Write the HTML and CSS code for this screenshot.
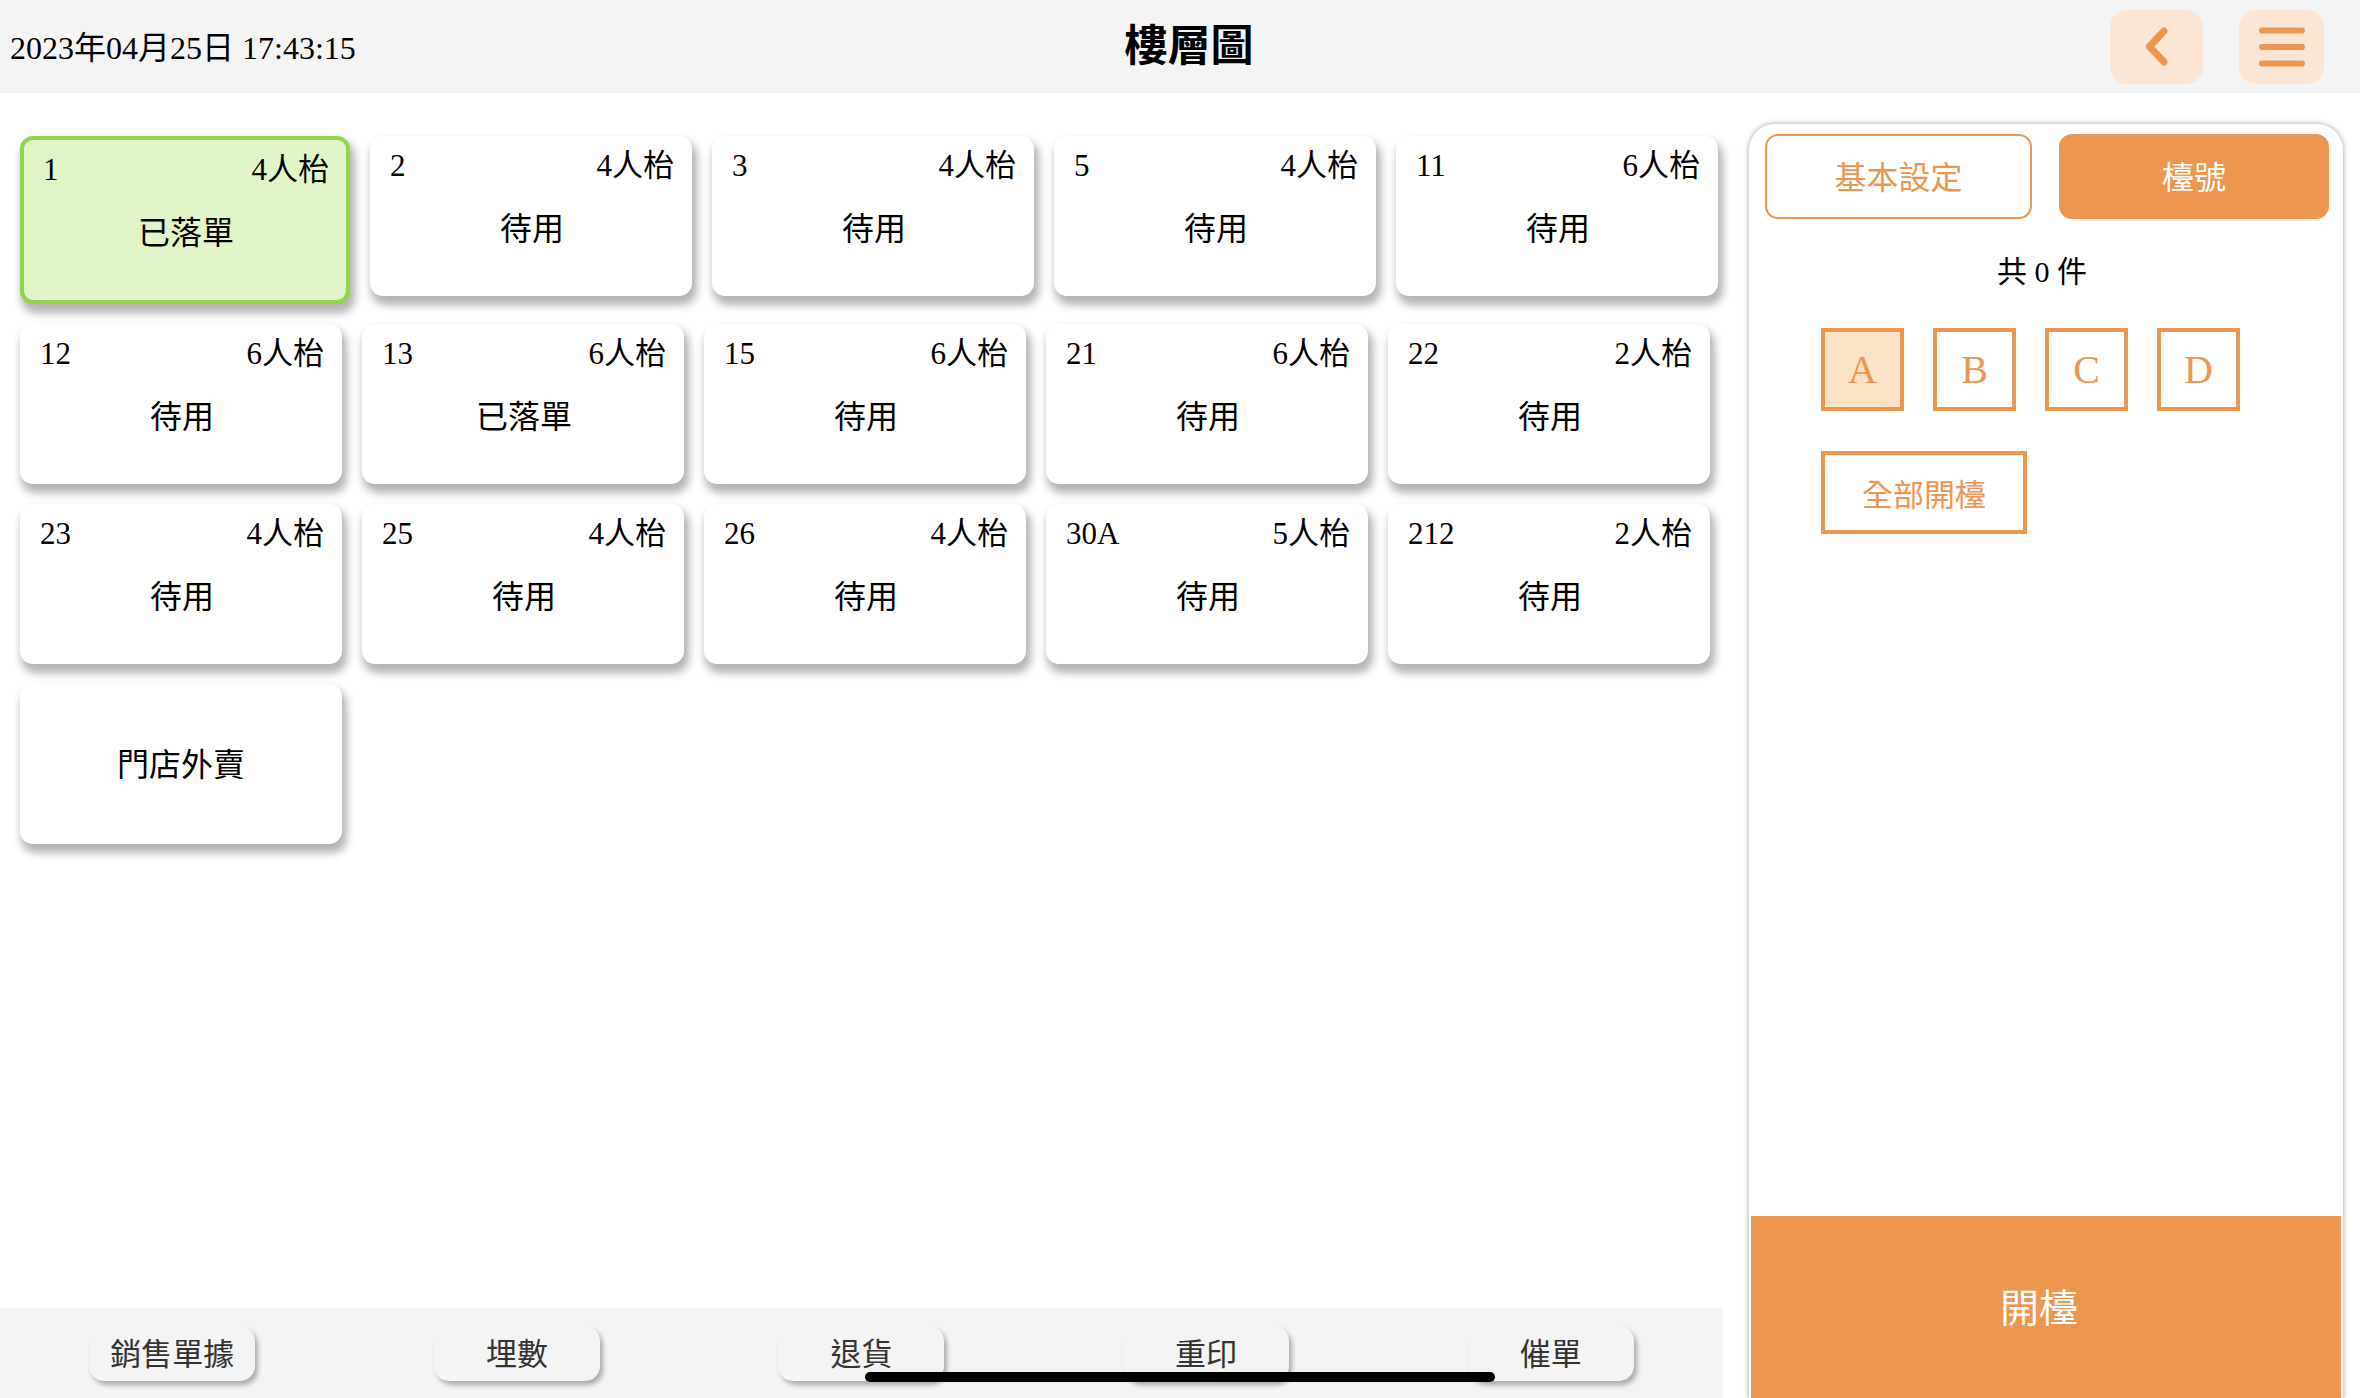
FILE: index.html
```html
<!DOCTYPE html>
<html lang="zh-Hant">
<head>
<meta charset="utf-8">
<title>樓層圖</title>
<link rel="stylesheet" href="styles.css">
</head>
<body>
<header class="header">
  <div class="date">2023年04月25日 17:43:15</div>
  <h1 class="title">樓層圖</h1>
  <div class="header-actions">
    <div class="icon-btn back">
      <svg width="23" height="39" viewBox="0 0 23 39"><path d="M19 4 L4.5 19.5 L19 35" fill="none" stroke="#ed9650" stroke-width="7" stroke-linecap="round" stroke-linejoin="round"/></svg>
    </div>
    <div class="icon-btn menu">
      <svg width="46" height="40" viewBox="0 0 46 40"><path d="M3 3.5 H43 M3 20 H43 M3 36.5 H43" fill="none" stroke="#ed9650" stroke-width="6" stroke-linecap="round"/></svg>
    </div>
  </div>
</header>

<div class="workspace">
  <section class="floor">
    <div class="tables">
      <div class="table-card is-ordered"><div class="card-head"><span>1</span><span>4人枱</span></div><div class="card-status">已落單</div></div>
      <div class="table-card"><div class="card-head"><span>2</span><span>4人枱</span></div><div class="card-status">待用</div></div>
      <div class="table-card"><div class="card-head"><span>3</span><span>4人枱</span></div><div class="card-status">待用</div></div>
      <div class="table-card"><div class="card-head"><span>5</span><span>4人枱</span></div><div class="card-status">待用</div></div>
      <div class="table-card"><div class="card-head"><span>11</span><span>6人枱</span></div><div class="card-status">待用</div></div>

      <div class="table-card"><div class="card-head"><span>12</span><span>6人枱</span></div><div class="card-status">待用</div></div>
      <div class="table-card"><div class="card-head"><span>13</span><span>6人枱</span></div><div class="card-status">已落單</div></div>
      <div class="table-card"><div class="card-head"><span>15</span><span>6人枱</span></div><div class="card-status">待用</div></div>
      <div class="table-card"><div class="card-head"><span>21</span><span>6人枱</span></div><div class="card-status">待用</div></div>
      <div class="table-card"><div class="card-head"><span>22</span><span>2人枱</span></div><div class="card-status">待用</div></div>

      <div class="table-card"><div class="card-head"><span>23</span><span>4人枱</span></div><div class="card-status">待用</div></div>
      <div class="table-card"><div class="card-head"><span>25</span><span>4人枱</span></div><div class="card-status">待用</div></div>
      <div class="table-card"><div class="card-head"><span>26</span><span>4人枱</span></div><div class="card-status">待用</div></div>
      <div class="table-card"><div class="card-head"><span>30A</span><span>5人枱</span></div><div class="card-status">待用</div></div>
      <div class="table-card"><div class="card-head"><span>212</span><span>2人枱</span></div><div class="card-status">待用</div></div>

      <div class="table-card takeout"><div class="card-status">門店外賣</div></div>
    </div>
    <nav class="tabbar">
      <div class="tab-cell"><div class="tab">銷售單據</div></div>
      <div class="tab-cell"><div class="tab">埋數</div></div>
      <div class="tab-cell"><div class="tab">退貨</div></div>
      <div class="tab-cell"><div class="tab">重印</div></div>
      <div class="tab-cell"><div class="tab">催單</div></div>
    </nav>
  </section>

  <aside class="panel">
    <div class="panel-tabs">
      <div class="ptab">基本設定</div>
      <div class="ptab active">檯號</div>
    </div>
    <div class="count">共 0 件</div>
    <div class="zones">
      <div class="zone active">A</div>
      <div class="zone">B</div>
      <div class="zone">C</div>
      <div class="zone">D</div>
    </div>
    <div class="open-all">全部開檯</div>
    <div class="open-btn">開檯</div>
  </aside>
</div>

<div class="home-indicator"></div>
</body>
</html>
```

FILE: styles.css
```css
html, body {
  margin: 0;
  padding: 0;
}

body {
  width: 2360px;
  height: 1398px;
  overflow: hidden;
  background: #ffffff;
  font-family: "Liberation Serif", "Noto Sans CJK TC", serif;
  color: #000;
  position: relative;
}

.header {
  height: 93px;
  background: #f4f4f4;
  display: grid;
  grid-template-columns: 1fr auto 1fr;
  align-items: center;
  padding-left: 10px;
  box-sizing: border-box;
}

.date {
  font-size: 32px;
  padding-bottom: 3px;
}

.title {
  margin: 0 0 0 8px;
  font-family: "Noto Sans CJK TC", sans-serif;
  font-weight: 700;
  font-size: 43px;
  line-height: 50px;
  padding-bottom: 10px;
}

.header-actions {
  justify-self: end;
  display: flex;
  gap: 36px;
  padding-right: 36px;
}

.icon-btn {
  height: 74px;
  border-radius: 17px;
  background: #fbe6d6;
  display: flex;
  align-items: center;
  justify-content: center;
}

.back { width: 93px; }
.menu { width: 85px; }

.workspace {
  display: flex;
  height: 1305px;
}

.floor {
  width: 1723px;
  flex: none;
  display: flex;
  flex-direction: column;
}

.tables {
  flex: 1;
  display: flex;
  flex-wrap: wrap;
  align-content: flex-start;
  align-items: flex-start;
  gap: 20px;
  padding: 43px 0 0 20px;
}

.table-card {
  width: 322px;
  height: 160px;
  box-sizing: border-box;
  padding: 12px 18px 0 20px;
  background: #fff;
  border-radius: 13px;
  box-shadow: 3px 7px 8px 2px rgba(0, 0, 0, 0.3);
  display: flex;
  flex-direction: column;
}

.table-card.is-ordered {
  width: 330px;
  height: 168px;
  border: 4px solid #8fd64c;
  background: #e2f5c6;
  padding: 12px 17px 0 19px;
}

.card-head {
  display: flex;
  justify-content: space-between;
  font-size: 31px;
  line-height: 36px;
}

.card-status {
  margin-top: 22px;
  text-align: center;
  font-family: "Noto Sans CJK TC", sans-serif;
  font-size: 32px;
  line-height: 40px;
}

.table-card.takeout {
  justify-content: center;
  padding: 0 0 4px 0;
}

.table-card.takeout .card-status {
  margin-top: 0;
}

.tabbar {
  height: 90px;
  flex: none;
  background: #f4f4f4;
  display: grid;
  grid-template-columns: repeat(5, 1fr);
}

.tab-cell {
  display: flex;
  align-items: center;
  justify-content: center;
}

.tab {
  width: 166px;
  height: 55px;
  border-radius: 15px;
  background: #f4f4f4;
  box-shadow: 3px 4px 5px rgba(0, 0, 0, 0.3);
  display: flex;
  align-items: center;
  justify-content: center;
  padding-bottom: 3px;
  box-sizing: border-box;
  font-family: "Noto Sans CJK TC", sans-serif;
  font-size: 31px;
  color: #333;
}

.panel {
  flex: none;
  width: 594px;
  margin: 31px 0 0 26px;
  background: #fff;
  border-radius: 26px 26px 0 0;
  box-shadow: 0 0 5px 1px rgba(0, 0, 0, 0.28);
  display: flex;
  flex-direction: column;
}

.panel-tabs {
  display: grid;
  grid-template-columns: 267px 270px;
  gap: 27px;
  padding: 10px 0 0 16px;
}

.ptab {
  height: 85px;
  box-sizing: border-box;
  border: 2px solid #ed9650;
  border-radius: 13px;
  color: #ed9650;
  font-family: "Noto Sans CJK TC", sans-serif;
  font-size: 32px;
  padding-bottom: 4px;
  display: flex;
  align-items: center;
  justify-content: center;
}

.ptab.active {
  background: #ed9650;
  color: #fff;
}

.count {
  margin-top: 35px;
  padding-right: 8px;
  text-align: center;
  font-size: 30px;
  line-height: 36px;
}

.zones {
  display: flex;
  gap: 29px;
  margin-top: 38px;
  padding-left: 72px;
}

.zone {
  width: 83px;
  height: 83px;
  box-sizing: border-box;
  border: 4px solid #ed9650;
  color: #ed9650;
  font-size: 40px;
  display: flex;
  align-items: center;
  justify-content: center;
}

.zone.active {
  background: #fbe3c5;
}

.open-all {
  margin: 40px 0 0 72px;
  width: 206px;
  height: 83px;
  box-sizing: border-box;
  border: 4px solid #ed9650;
  color: #ed9650;
  font-family: "Noto Sans CJK TC", sans-serif;
  font-size: 31px;
  display: flex;
  align-items: center;
  justify-content: center;
}

.open-btn {
  margin: auto 2px 0 2px;
  height: 182px;
  padding-right: 14px;
  padding-bottom: 4px;
  box-sizing: border-box;
  background: #ed9650;
  color: #fff;
  font-family: "Noto Sans CJK TC", sans-serif;
  font-size: 39px;
  display: flex;
  align-items: center;
  justify-content: center;
}

.home-indicator {
  position: absolute;
  left: 865px;
  bottom: 16px;
  width: 630px;
  height: 10px;
  border-radius: 5px;
  background: #000;
}
```
